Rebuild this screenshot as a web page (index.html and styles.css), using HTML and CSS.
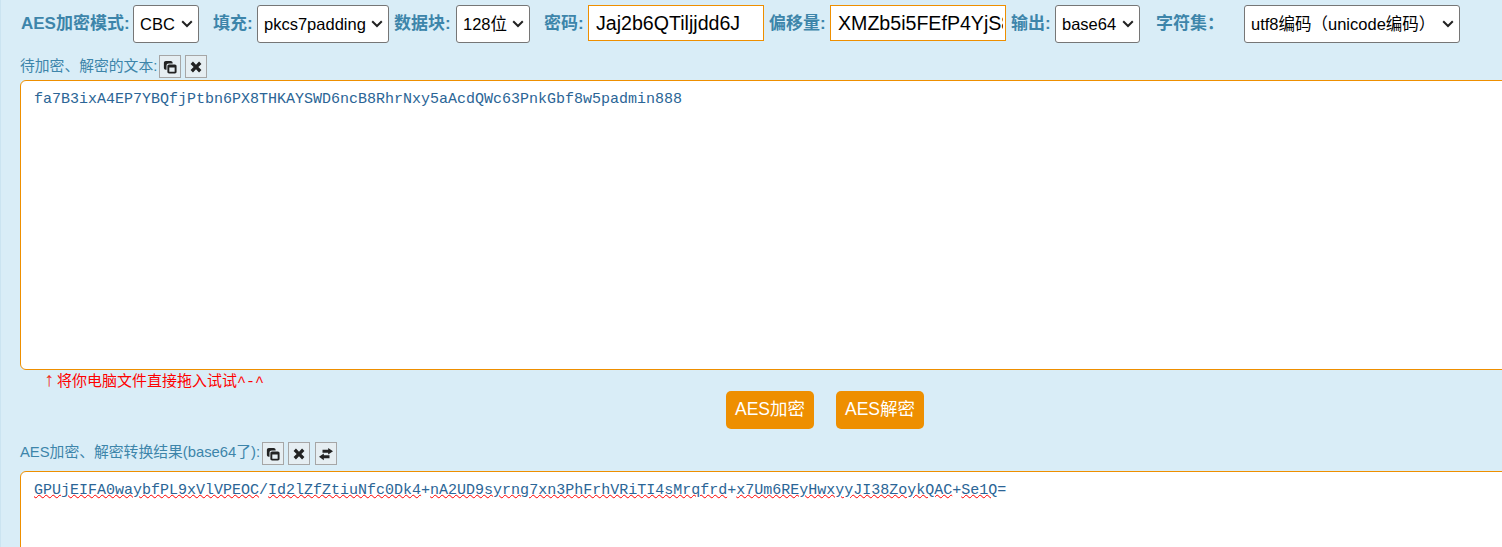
FILE: index.html
```html
<!DOCTYPE html>
<html lang="zh-CN">
<head>
<meta charset="utf-8">
<title>AES加密</title>
<link rel="stylesheet" href="styles.css">
</head>
<body>
<main class="page">
  <form class="options">
    <label class="opt opt-mode">AES加密模式:</label>
    <select class="sel sel-mode"><option>CBC</option></select>
    <label class="opt opt-pad">填充:</label>
    <select class="sel sel-pad"><option>pkcs7padding</option></select>
    <label class="opt opt-block">数据块:</label>
    <select class="sel sel-block"><option>128位</option></select>
    <label class="opt opt-key">密码:</label>
    <input class="txt" value="Jaj2b6QTiljjdd6J">
    <label class="opt opt-iv">偏移量:</label>
    <input class="txt" value="XMZb5i5FEfP4YjS8">
    <label class="opt opt-out">输出:</label>
    <select class="sel sel-out"><option>base64</option></select>
    <label class="opt opt-charset">字符集：</label>
    <select class="sel sel-charset"><option>utf8编码（unicode编码）</option></select>
  </form>

  <div class="caption caption-in">
    <span class="caption-text">待加密、解密的文本:</span>
    <button class="tool" type="button"><svg viewBox="0 0 16 16" class="ico"><use href="#i-copy"/></svg></button>
    <button class="tool" type="button"><svg viewBox="0 0 16 16" class="ico"><use href="#i-x"/></svg></button>
  </div>
  <div class="area area-in">fa7B3ixA4EP7YBQfjPtbn6PX8THKAYSWD6ncB8RhrNxy5aAcdQWc63PnkGbf8w5padmin888</div>
  <p class="hint"><span class="arrow">↑</span>将你电脑文件直接拖入试试<span class="smile">^-^</span></p>
  <div class="actions">
    <button class="go" type="button">AES加密</button>
    <button class="go" type="button">AES解密</button>
  </div>

  <div class="caption caption-out">
    <span class="caption-text">AES加密、解密转换结果(base64了):</span>
    <button class="tool" type="button"><svg viewBox="0 0 16 16" class="ico"><use href="#i-copy"/></svg></button>
    <button class="tool" type="button"><svg viewBox="0 0 16 16" class="ico"><use href="#i-x"/></svg></button>
    <button class="tool" type="button"><svg viewBox="0 0 16 16" class="ico"><use href="#i-swap"/></svg></button>
  </div>
  <div class="area area-out"><span class="typo">GPUjEIFA0waybfPL9xVlVPEOC</span>/<span class="typo">Id2lZfZtiuNfc0Dk4</span>+<span class="typo">nA2UD9syrng7xn3PhFrhVRiTI4sMrqfrd</span>+<span class="typo">x7Um6REyHwxyyJI38ZoykQAC</span>+<span class="typo">Se1Q</span>=</div>
</main>

<svg class="defs" width="0" height="0" aria-hidden="true">
  <symbol id="i-copy" viewBox="0 0 16 16">
    <path d="M1 3.200C1 1.900 1.900 1 3.200 1h5.600C10.100 1 11 1.900 11 3.200V4H6.500C5 4 4 5 4 6.500V11H3.200C1.900 11 1 10.100 1 8.800Z" fill="#222"/>
    <path d="M7 5h6.500C14.800 5 15.500 5.800 15.500 7v6.500c0 1.200-.7 2-2 2H7c-1.200 0-2-.8-2-2V7C5 5.800 5.800 5 7 5Zm.2 3.500v4.800h6.100V8.500Z" fill="#222" fill-rule="evenodd"/>
  </symbol>
  <symbol id="i-x" viewBox="0 0 16 16">
    <path d="M4.500 1.800 8 5.300l3.500-3.500 2.700 2.700L10.700 8l3.500 3.500-2.700 2.700L8 10.700l-3.500 3.500-2.700-2.700L5.300 8 1.800 4.500Z" fill="#222"/>
  </symbol>
  <symbol id="i-swap" viewBox="0 0 16 16">
    <path d="M10.500 1 16 4.800l-5.500 3.800V6.500H4V3.200h6.500Z" fill="#222"/>
    <path d="M5.500 7.400v2.100H12v3.300H5.500V15L0 11.200Z" fill="#222"/>
  </symbol>
</svg>
</body>
</html>
```

FILE: styles.css
```css
* { box-sizing: border-box; }
html, body { margin: 0; padding: 0; height: 100%; overflow: hidden; }
body {
  background: #d9edf7;
  font-family: "Liberation Sans", "Noto Sans CJK SC", sans-serif;
}
.page {
  width: 1530px;
  height: 547px;
  border-left: 1px solid #cbe4f1;
  overflow: hidden;
}
.options {
  display: flex;
  align-items: flex-start;
  height: 44px;
  padding: 5px 0 0 20px;
}
.opt {
  font-size: 17px;
  font-weight: 700;
  color: #3d85aa;
  line-height: 38px;
  white-space: nowrap;
}
.opt-mode { width: 112px; }
.opt-pad { width: 44px; margin-left: 14px; }
.opt-block { width: 62px; margin-left: 5px; }
.opt-key { width: 44px; margin-left: 14px; }
.opt-iv { width: 61px; margin-left: 5px; }
.opt-out { width: 44px; margin-left: 5px; }
.opt-charset { width: 88px; margin-left: 16px; }
.sel {
  appearance: none;
  height: 38px;
  font-size: 16.5px;
  font-family: "Liberation Sans", "Noto Sans CJK SC", sans-serif;
  color: #000;
  background: #fff url("data:image/svg+xml,%3Csvg xmlns='http://www.w3.org/2000/svg' width='12' height='8'%3E%3Cpath d='M1.200 1.300 6 6l4.800-4.700' fill='none' stroke='%23222' stroke-width='2'/%3E%3C/svg%3E") no-repeat right 5px center;
  border: 1px solid #767676;
  border-radius: 3px;
  padding: 0 18px 0 6px;
}
.sel-mode { width: 66px; }
.sel-pad { width: 132px; }
.sel-block { width: 74px; }
.sel-out { width: 85px; }
.sel-charset { width: 216px; }
.txt {
  width: 176px;
  height: 36px;
  padding: 0 2px 0 7px;
  font-size: 19.6px;
  font-family: "Liberation Sans", sans-serif;
  color: #000;
  background: #fff;
  border: 1px solid #ee8f00;
  border-radius: 0;
  outline: none;
}
.caption {
  display: flex;
  align-items: center;
  height: 23px;
  padding-left: 19px;
  gap: 4.500px;
}
.caption-in { margin-top: 11px; }
.caption-out { margin-top: 13px; }
.caption-text {
  font-size: 14.8px;
  line-height: 19px;
  color: #3d85aa;
  white-space: nowrap;
  margin-right: -3px;
}
.caption-out .caption-text { padding-bottom: 2px; }
.tool {
  width: 22px;
  height: 23px;
  padding: 0;
  display: flex;
  align-items: center;
  justify-content: center;
  background: #e6eef2;
  border: 1px solid #a6a6a6;
}
.ico { width: 14px; height: 14px; display: block; }
.defs { position: absolute; }
.area {
  margin-left: 19px;
  background: #fff;
  border: 1px solid #ee8f00;
  border-radius: 6px 0 0 6px;
  padding: 9px 13px;
  font-family: "Liberation Mono", monospace;
  font-size: 15px;
  line-height: 20px;
  color: #2b6596;
  white-space: pre;
}
.area-in { height: 290px; margin-top: 2px; }
.area-out { height: 100px; margin-top: 6px; border-bottom-left-radius: 0; }
.typo { text-decoration: underline wavy #f00 1px; text-underline-offset: 0; }
.hint {
  margin: 0;
  height: 21px;
  padding-left: 43px;
  font-size: 15px;
  line-height: 20px;
  color: #f00;
  white-space: nowrap;
}
.arrow { display: inline-block; width: 13px; font-size: 20px; font-weight: 700; line-height: 18px; color: #f0301c; }
.smile { font-family: "Liberation Mono", monospace; }
.actions {
  display: flex;
  justify-content: center;
  gap: 22px;
  height: 38px;
  padding-left: 119px;
}
.go {
  width: 88px;
  height: 38px;
  padding: 0 0 6px;
  background: #ee8f00;
  color: #fff;
  border: 0;
  border-radius: 5px;
  font-size: 17.5px;
  font-family: "Liberation Sans", "Noto Sans CJK SC", sans-serif;
}
```
